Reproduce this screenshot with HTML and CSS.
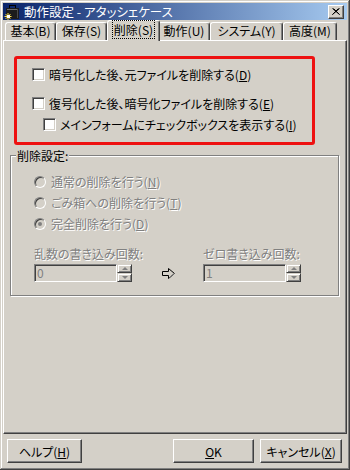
FILE: index.html
```html
<!DOCTYPE html>
<html>
  <head>
    <title>動作設定 - アタッシェケース</title>
    <link rel="stylesheet" href="styles.css">
  </head>
  <body>

    <div class="window">
        <div class="titlebar">
            <svg class="app-icon" width="16" height="16" viewBox="0 0 16 16">
                <rect x="5.5" y="1.5" width="6" height="3" fill="none" stroke="#000"/>
                <rect x="2" y="4" width="13" height="11" fill="#1c1c1c"/>
                <rect x="3" y="5" width="11" height="1" fill="#6b6b6b"/>
                <rect x="13" y="5" width="1" height="9" fill="#4a4a4a"/>
                <path d="M4 9v7M0.5 12.5h7M1.5 10l5 5M6.5 10l-5 5" stroke="#ffe24a" stroke-width="1"/>
                <rect x="3" y="11" width="3" height="3" fill="#fff"/>
            </svg>
            <span class="title">動作設定 - アタッシェケース</span>
            <div class="close">
                <svg width="8" height="7" viewBox="0 0 8 7">
                    <path d="M0.5 0.5l7 6M7.5 0.5l-7 6M1.5 0.5l6 6M6.5 0.5l-6 6" stroke="#000" stroke-width="1"/>
                </svg>
            </div>
        </div>

        <div class="tabs">
            <div class="tab">基本(B)</div>
            <div class="tab">保存(S)</div>
            <div class="tab active"><span class="focus">削除(S)</span></div>
            <div class="tab next">動作(U)</div>
            <div class="tab wide">システム(Y)</div>
            <div class="tab last">高度(M)</div>
        </div>

        <div class="panel">
            <div class="highlight">
                <div class="check"><span class="box"></span><span>暗号化した後、元ファイルを削除する(<u>D</u>)</span></div>
                <div class="check"><span class="box"></span><span>復号化した後、暗号化ファイルを削除する(<u>E</u>)</span></div>
                <div class="check sub"><span class="box"></span><span>メインフォームにチェックボックスを表示する(<u>I</u>)</span></div>
            </div>

            <div class="group">
                <span class="legend">削除設定:</span>
                <div class="radio"><span class="dot"></span><span>通常の削除を行う(<u>N</u>)</span></div>
                <div class="radio"><span class="dot"></span><span>ごみ箱への削除を行う(<u>T</u>)</span></div>
                <div class="radio"><span class="dot checked"></span><span>完全削除を行う(<u>D</u>)</span></div>

                <div class="counts">
                    <div class="count">
                        <div class="count-label">乱数の書き込み回数:</div>
                        <div class="spin">
                            <div class="field">0</div>
                            <div class="spin-btns"><span class="up"></span><span class="down"></span></div>
                        </div>
                    </div>
                    <svg class="arrow" width="16" height="11" viewBox="0 0 16 11">
                        <path d="M1.5 3.5h6v-3l6 5-6 5v-3h-6z" fill="#d4d0c8" stroke="#000"/>
                        <path d="M8.5 9.5l5-4" stroke="#808080"/>
                    </svg>
                    <div class="count">
                        <div class="count-label">ゼロ書き込み回数:</div>
                        <div class="spin">
                            <div class="field">1</div>
                            <div class="spin-btns"><span class="up"></span><span class="down"></span></div>
                        </div>
                    </div>
                </div>
            </div>
        </div>

        <div class="buttons">
            <div class="btn help">ヘルプ(<u>H</u>)</div>
            <div class="btn-group">
                <div class="btn ok"><u>O</u>K</div>
                <div class="btn cancel">キャンセル(<u>X</u>)</div>
            </div>
        </div>
    </div>

  </body>
</html>
```

FILE: styles.css
```css
body { margin: 0; font-family: "Noto Sans CJK JP", "Liberation Sans", sans-serif; font-size: 12px; font-feature-settings: "palt"; color: #000; }

u { text-decoration: underline; text-underline-offset: 1px; }

.window {
    width: 350px;
    height: 470px;
    box-sizing: border-box;
    padding: 3px;
    background: #d4d0c8;
    box-shadow: inset -1px -1px #404040, inset 1px 1px #d4d0c8, inset -2px -2px #808080, inset 2px 2px #fff;
    display: flex;
    flex-direction: column;
}

/* title bar */
.titlebar {
    height: 17px;
    display: flex;
    align-items: center;
    gap: 4px;
    padding: 0 3px 0 1px;
    background: linear-gradient(to right, #0a246a, #a6caf0);
    color: #fff;
}
.app-icon { flex: none; }
.title { flex: 1; line-height: 17px; white-space: nowrap; font-size: 12.5px; }
.close {
    width: 16px;
    height: 14px;
    box-sizing: border-box;
    background: #d4d0c8;
    border: 1px solid;
    border-color: #fff #404040 #404040 #fff;
    box-shadow: inset -1px -1px #808080;
    display: flex;
    align-items: center;
    justify-content: center;
}

/* tabs */
.tabs {
    height: 20px;
    display: flex;
    align-items: flex-end;
    padding-left: 2px;
}
.tab {
    width: 51px;
    height: 18px;
    box-sizing: border-box;
    border-top: 1px solid #fff;
    border-left: 1px solid #fff;
    border-right: 1px solid #404040;
    border-radius: 3px 3px 0 0;
    box-shadow: inset -1px 0 #808080;
    line-height: 16px;
    text-align: center;
    white-space: nowrap;
    background: #d4d0c8;
}
.tab.active {
    width: 53px;
    height: 21px;
    margin: 0 -2px -1px 0;
    position: relative;
    z-index: 1;
    line-height: 17px;
}
.tab.next { width: 52px; }
.tab.wide { width: 73px; }
.tab.last { width: 54px; }
.focus { outline: 1px dotted #000; padding: 0 1px; }

/* tab page */
.panel {
    flex: 1;
    border: 1px solid;
    border-color: #fff #404040 #404040 #fff;
    box-shadow: inset -1px -1px #808080;
    padding: 15px 0 0 10px;
    display: flex;
    flex-direction: column;
}

.highlight {
    width: 301px;
    height: 89px;
    box-sizing: border-box;
    border: 3px solid #ee1111;
    border-radius: 3px;
    padding: 9px 0 0 15px;
}

.check { display: flex; align-items: center; gap: 4px; height: 13px; line-height: 13px; white-space: nowrap; }
.check + .check { margin-top: 16px; }
.check.sub { margin: 8px 0 0 11px; }
.box {
    width: 13px;
    height: 13px;
    box-sizing: border-box;
    flex: none;
    background: #fff;
    border: 1px solid;
    border-color: #808080 #fff #fff #808080;
    box-shadow: inset 1px 1px #404040, inset -1px -1px #d4d0c8;
}

/* group box */
.group {
    position: relative;
    width: 329px;
    height: 141px;
    box-sizing: border-box;
    margin: 10px 0 0 -4px;
    border: 1px solid #808080;
    box-shadow: inset 1px 1px #fff, 1px 1px #fff;
    padding: 19px 0 0 23px;
    color: #808080;
    text-shadow: 1px 1px #fff;
}
.legend {
    position: absolute;
    top: -7px;
    left: 5px;
    padding: 0 1px;
    line-height: 13px;
    background: #d4d0c8;
    color: #000;
    text-shadow: none;
}

.radio { display: flex; align-items: center; gap: 5px; height: 13px; line-height: 13px; white-space: nowrap; }
.radio + .radio { margin-top: 8px; }
.dot {
    width: 12px;
    height: 12px;
    box-sizing: border-box;
    flex: none;
    border-radius: 50%;
    border: 1px solid;
    border-color: #808080 #fff #fff #808080;
    box-shadow: inset 1px 1px #404040;
    background: #d4d0c8;
    display: flex;
    align-items: center;
    justify-content: center;
}
.dot.checked::after { content: ""; width: 4px; height: 4px; border-radius: 50%; background: #808080; }

.counts { display: flex; align-items: flex-end; margin-top: 17px; }
.count { width: 98px; flex: none; }
.count-label { line-height: 13px; white-space: nowrap; }
.spin { display: flex; margin-top: 4px; }
.field {
    width: 83px;
    height: 18px;
    box-sizing: border-box;
    border: 1px solid;
    border-color: #808080 #fff #fff #808080;
    box-shadow: inset 1px 1px #404040, inset -1px -1px #d4d0c8;
    padding: 0 2px;
    line-height: 15px;
    text-shadow: none;
}
.spin-btns { display: flex; flex-direction: column; width: 15px; height: 18px; }
.spin-btns span {
    flex: 1;
    box-sizing: border-box;
    border: 1px solid;
    border-color: #d4d0c8 #404040 #404040 #d4d0c8;
    box-shadow: inset 1px 1px #fff, inset -1px -1px #808080;
    display: flex;
    align-items: center;
    justify-content: center;
}
.spin-btns .up::after { content: ""; border: 3px solid transparent; border-bottom-color: #808080; border-top: 0; }
.spin-btns .down::after { content: ""; border: 3px solid transparent; border-top-color: #808080; border-bottom: 0; }

.arrow { margin: 0 26px 3px 29px; flex: none; }

/* bottom buttons */
.buttons {
    height: 33px;
    box-sizing: border-box;
    padding: 5px 5px 4px 4px;
    display: flex;
    justify-content: space-between;
}
.btn-group { display: flex; gap: 6px; }
.btn {
    height: 24px;
    box-sizing: border-box;
    border: 1px solid;
    border-color: #fff #404040 #404040 #fff;
    box-shadow: inset -1px -1px #808080;
    display: flex;
    align-items: center;
    justify-content: center;
    white-space: nowrap;
}
.help { width: 75px; }
.ok { width: 81px; }
.cancel { width: 82px; }
```
